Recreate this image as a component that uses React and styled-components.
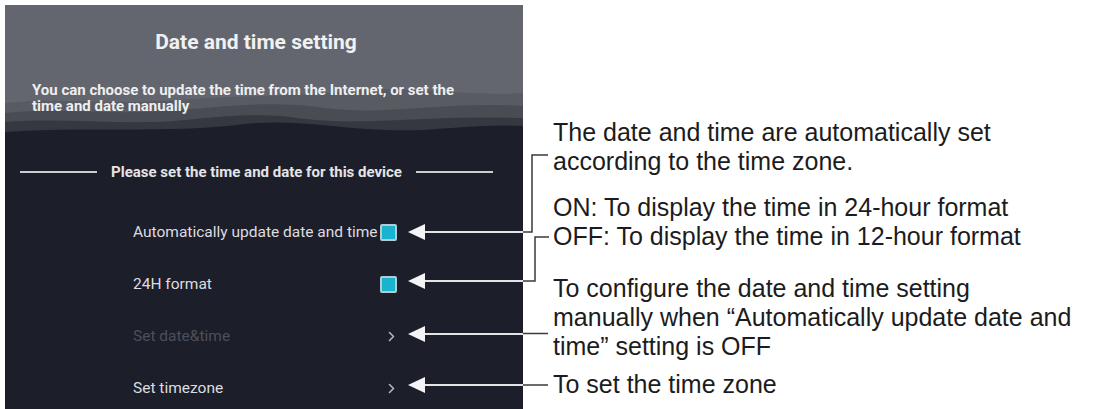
import React from "react";
import styled, { createGlobalStyle } from "styled-components";

const GlobalStyle = createGlobalStyle`
  html, body { margin: 0; padding: 0; background: #ffffff; }
  body {
    width: 1093px;
    height: 409px;
    overflow: hidden;
    font-family: Roboto, "Liberation Sans", sans-serif;
  }
`;

const Page = styled.div`
  position: relative;
  display: flex;
  width: 1093px;
  height: 409px;
`;

const Panel = styled.section`
  position: relative;
  flex-shrink: 0;
  display: flex;
  flex-direction: column;
  width: 518px;
  height: 404px;
  margin: 5px 0 0 5px;
  background: #1c1e29;
  overflow: hidden;
`;

const Backdrop = styled.svg`
  position: absolute;
  top: 0;
  left: 0;
  width: 518px;
  height: 140px;
  z-index: 0;
`;

const Header = styled.header`
  position: relative;
  z-index: 1;
  padding-top: 25px;
`;

const Title = styled.h1`
  margin: 0;
  padding-right: 16px;
  font-size: 21px;
  line-height: 24px;
  font-weight: 700;
  text-align: center;
  color: #f1f1f3;
`;

const Subtitle = styled.p`
  margin: 28px 0 0;
  padding-left: 27px;
  width: 445px;
  font-size: 15px;
  line-height: 16px;
  font-weight: 700;
  color: #eeeef0;
`;

const Divider = styled.div`
  position: relative;
  z-index: 1;
  display: flex;
  align-items: center;
  gap: 14px;
  margin-top: 49px;
  padding: 0 30px 0 15px;
  height: 18px;
`;

const Rule = styled.span`
  flex: 1;
  height: 2px;
  background: #cdcdd0;
`;

const DividerText = styled.span`
  font-size: 15px;
  line-height: 18px;
  font-weight: 700;
  color: #e4e4e6;
  white-space: nowrap;
`;

const Rows = styled.ul`
  list-style: none;
  margin: 25px 0 0 128px;
  padding: 0;
  width: 264px;
`;

const Row = styled.li`
  display: flex;
  align-items: center;
  justify-content: space-between;
  height: 52px;
`;

const Label = styled.span`
  font-size: 15.5px;
  line-height: 18px;
  color: ${(p) => (p.$dim ? "#4d505a" : "#dcdce0")};
  white-space: nowrap;
`;

const Checkbox = styled.span`
  box-sizing: border-box;
  width: 17px;
  height: 17px;
  border: 2px solid #b3cbd3;
  border-radius: 2px;
  background: #19b3cf;
`;

const ChevronIcon = styled.svg`
  width: 7px;
  height: 11px;
  margin-right: 2px;
`;

const Notes = styled.div`
  display: flex;
  flex-direction: column;
  padding: 118px 0 0 30px;
  font-family: "Liberation Sans", Arial, sans-serif;
  font-size: 25px;
  line-height: 29px;
  color: #1c1c1c;
`;

const Note = styled.p`
  margin: ${(p) => p.$gap || 0}px 0 0;
  white-space: nowrap;
`;

const Callouts = styled.svg`
  position: absolute;
  top: 0;
  left: 0;
  width: 1093px;
  height: 409px;
  pointer-events: none;
  z-index: 2;
`;

const Chevron = () => (
  <ChevronIcon viewBox="0 0 7 11">
    <path d="M1.5 1.5 L5.5 5.5 L1.5 9.5" fill="none" stroke="#b4b6bc" strokeWidth="1.6" strokeLinecap="round" strokeLinejoin="round" />
  </ChevronIcon>
);

const rows = [
  { label: "Automatically update date and time", control: "check" },
  { label: "24H format", control: "check" },
  { label: "Set date&time", control: "chevron", dim: true },
  { label: "Set timezone", control: "chevron" },
];

const arrowYs = [232, 281, 334, 385];

export default function App() {
  return (
    <>
      <GlobalStyle />
      <Page>
        <Panel>
          <Backdrop viewBox="0 0 518 140" preserveAspectRatio="none">
            <rect x="0" y="0" width="518" height="140" fill="#63666e" />
            <path d="M0,98 C50,92 110,100 170,95 C230,90 290,92 350,86 C410,80 460,92 518,88 L518,140 L0,140 Z" fill="#595b63" />
            <path d="M0,108 C50,102 100,110 160,106 C220,102 260,95 320,103 C380,111 440,96 518,101 L518,140 L0,140 Z" fill="#4a4c54" />
            <path d="M0,117 C60,112 120,121 180,115 C230,110 260,108 300,114 C360,121 420,110 518,113 L518,140 L0,140 Z" fill="#363841" />
            <path d="M0,127 C80,121 160,129 240,119 C290,114 330,123 380,125 C430,127 470,118 518,121 L518,140 L0,140 Z" fill="#1c1e29" />
          </Backdrop>
          <Header>
            <Title>Date and time setting</Title>
            <Subtitle>
              You can choose to update the time from the Internet, or set the time and date manually
            </Subtitle>
          </Header>
          <Divider>
            <Rule />
            <DividerText>Please set the time and date for this device</DividerText>
            <Rule />
          </Divider>
          <Rows>
            {rows.map((r) => (
              <Row key={r.label}>
                <Label $dim={r.dim}>{r.label}</Label>
                {r.control === "check" ? <Checkbox /> : <Chevron />}
              </Row>
            ))}
          </Rows>
        </Panel>
        <Notes>
          <Note>
            The date and time are automatically set
            <br />
            according to the time zone.
          </Note>
          <Note $gap={17}>
            ON: To display the time in 24-hour format
            <br />
            OFF: To display the time in 12-hour format
          </Note>
          <Note $gap={23}>
            To configure the date and time setting
            <br />
            manually when “Automatically update date and
            <br />
            time” setting is OFF
          </Note>
          <Note $gap={9}>To set the time zone</Note>
        </Notes>
        <Callouts viewBox="0 0 1093 409">
          {arrowYs.map((y) => (
            <g key={y}>
              <line x1="424" y1={y} x2="523" y2={y} stroke="#e4e4e6" strokeWidth="2" />
              <polygon points={`408,${y} 425,${y - 8} 425,${y + 8}`} fill="#f4f4f6" />
            </g>
          ))}
          <g fill="none" stroke="#3a3a3a" strokeWidth="1.5">
            <path d="M523 232 H532 V155 H548" />
            <path d="M523 281 H535 V237 H549" />
            <path d="M523 333.5 H548" />
            <path d="M523 385 H548" />
          </g>
        </Callouts>
      </Page>
    </>
  );
}
